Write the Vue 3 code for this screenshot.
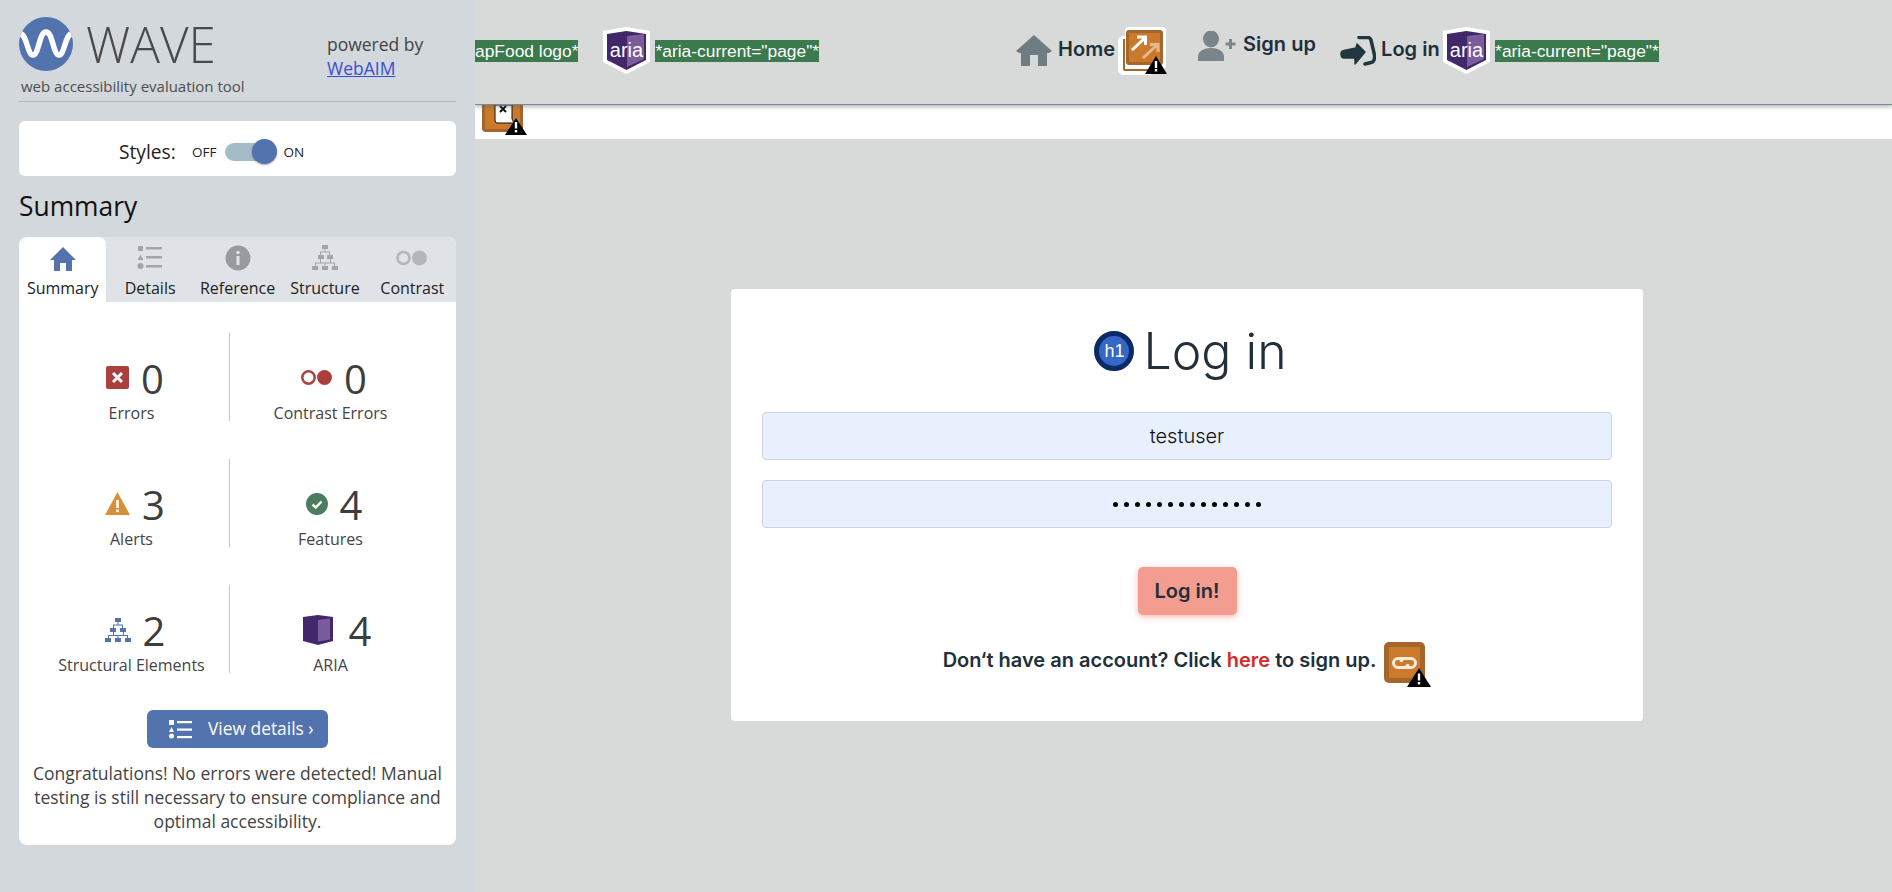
<script setup>
const tabs = ['Summary', 'Details', 'Reference', 'Structure', 'Contrast']
const dots = 14
</script>

<template>
  <div class="page">
    <aside class="wave">
      <div class="brand">
        <div class="brand_left">
          <div class="logo_row">
            <svg class="logo" viewBox="0 0 54 54">
              <clipPath id="logo_clip"><circle cx="27" cy="27" r="27" /></clipPath>
              <circle cx="27" cy="27" r="27" fill="#5273ae" />
              <path clip-path="url(#logo_clip)" d="M0 17C8 15 8 38 14 38C20 38 20 15 27 15C34 15 34 38 40 38C46 38 46 15 54 17" fill="none" stroke="#fff" stroke-width="5.5" />
            </svg>
            <span class="wave_name">WAVE</span>
          </div>
          <div class="tagline">web accessibility evaluation tool</div>
        </div>
        <div class="powered">powered by<br><a class="webaim" href="#">WebAIM</a></div>
      </div>

      <div class="styles_card">
        <span class="styles_label">Styles:</span>
        <span class="toggle_text off">OFF</span>
        <span class="track"><span class="knob"></span></span>
        <span class="toggle_text on">ON</span>
      </div>

      <h2 class="summary_title">Summary</h2>

      <div class="panel">
        <div class="tabs">
          <div v-for="(tab, i) in tabs" :key="tab" class="tab" :class="{ tab_active: i == 0 }">
            <svg v-if="i == 0" class="tab_icon" viewBox="0 0 26 26"><path fill="#5273ae" d="M13 2L26 15H22V26H16V18H10V26H4V15H0Z" /></svg>
            <svg v-if="i == 1" class="tab_icon" viewBox="0 0 26 26" fill="#a2a5a9"><rect x="1" y="1" width="5" height="5" /><path d="M3.5 9.5L6.500 15H.5Z" /><circle cx="3.500" cy="21" r="3" /><rect x="9" y="2" width="16" height="2.500" /><rect x="9" y="11" width="16" height="2.500" /><rect x="9" y="20" width="16" height="2.500" /></svg>
            <svg v-if="i == 2" class="tab_icon" viewBox="0 0 26 26"><circle cx="13" cy="13" r="12.500" fill="#989a9e" /><rect x="11.500" y="11" width="3" height="9" fill="#dfe3e7" /><circle cx="13" cy="7.500" r="1.800" fill="#dfe3e7" /></svg>
            <svg v-if="i == 3" class="tab_icon" viewBox="0 0 26 26" fill="#a2a5a9"><rect x="10" y="0" width="6" height="4" /><rect x="6" y="10" width="6" height="4" /><rect x="15" y="10" width="6" height="4" /><rect x="0" y="21" width="6" height="4" /><rect x="10" y="21" width="6" height="4" /><rect x="20" y="21" width="6" height="4" /><path d="M12.500 4h1v2.500H18V10h-1V7.500H9V10H8V6.500h4.500zM8 14h1v3.500h9V14h1v3.500h4V21h-1v-2.500H13.500V21h-1v-2.500H4V21H3v-3.500h5z" /></svg>
            <svg v-if="i == 4" class="tab_icon tab_icon_wide" viewBox="0 0 32 16"><circle cx="7.500" cy="8" r="6" fill="none" stroke="#b4b7ba" stroke-width="2.500" /><circle cx="23.500" cy="8" r="7.500" fill="#b4b7ba" /></svg>
            <span>{{ tab }}</span>
          </div>
        </div>

        <div class="stats">
          <div class="stat stat_left">
            <div class="stat_top">
              <svg class="stat_icon" width="23" height="23" viewBox="0 0 23 23"><rect width="23" height="23" rx="2" fill="#ab3f3d" /><path d="M7 7L16 16M16 7L7 16" stroke="#fff" stroke-width="3" /></svg>
              <span class="num">0</span>
            </div>
            <div class="stat_label">Errors</div>
          </div>
          <div class="stat">
            <div class="stat_top">
              <svg class="stat_icon" width="31" height="15" viewBox="0 0 31 15"><circle cx="7.500" cy="7.500" r="6.200" fill="none" stroke="#ab3f3d" stroke-width="2.500" /><circle cx="23.500" cy="7.500" r="7.500" fill="#ab3f3d" /></svg>
              <span class="num">0</span>
            </div>
            <div class="stat_label">Contrast Errors</div>
          </div>
          <div class="stat stat_left">
            <div class="stat_top">
              <svg class="stat_icon" width="25" height="23" viewBox="0 0 25 23"><path d="M12.500 0L25 23H0Z" fill="#d98f38" /><rect x="11.200" y="8" width="2.600" height="8" fill="#fff" /><rect x="11.200" y="17.500" width="2.600" height="2.600" fill="#fff" /></svg>
              <span class="num">3</span>
            </div>
            <div class="stat_label">Alerts</div>
          </div>
          <div class="stat">
            <div class="stat_top">
              <svg class="stat_icon" width="22" height="22" viewBox="0 0 22 22"><circle cx="11" cy="11" r="11" fill="#4c7d61" /><path d="M6.500 11.500L9.800 14.500L15.500 8.500" fill="none" stroke="#fff" stroke-width="2.400" /></svg>
              <span class="num">4</span>
            </div>
            <div class="stat_label">Features</div>
          </div>
          <div class="stat stat_left">
            <div class="stat_top">
              <svg class="stat_icon" width="26" height="24" viewBox="0 0 26 24" fill="#5273ae"><rect x="10" y="0" width="6" height="4" /><rect x="5" y="10" width="6" height="4" /><rect x="15" y="10" width="6" height="4" /><rect x="0" y="20" width="6" height="4" /><rect x="10" y="20" width="6" height="4" /><rect x="20" y="20" width="6" height="4" /><path d="M12.500 4h1v2.500H18V10h-1V7.500H9V10H8V6.500h4.500zM8 14h1v3h9v-3h1v3h4v3h-1v-2H13.500v2h-1v-2H4v2H3v-3h5z" /></svg>
              <span class="num">2</span>
            </div>
            <div class="stat_label">Structural Elements</div>
          </div>
          <div class="stat">
            <div class="stat_top stat_top_aria">
              <svg class="stat_icon" width="30" height="30" viewBox="0 0 30 30"><path d="M0 2L15 0L30 2V26L15 30L0 26Z" fill="#42286b" /><path d="M15 5L27 3.500V24.500L15 26.500Z" fill="#7a5b9b" /></svg>
              <span class="num">4</span>
            </div>
            <div class="stat_label">ARIA</div>
          </div>
        </div>

        <div class="details_row">
          <button class="details_btn">
            <svg width="23" height="19" viewBox="0 0 23 19" fill="#fff"><rect x="0" y="0" width="5" height="5" /><path d="M2.500 7L5 12H0Z" /><circle cx="2.500" cy="16" r="2.500" /><rect x="8" y="1" width="15" height="2.200" /><rect x="8" y="8.500" width="15" height="2.200" /><rect x="8" y="16" width="15" height="2.200" /></svg>
            <span>View details ›</span>
          </button>
        </div>
        <p class="congrats">Congratulations! No errors were detected! Manual testing is still necessary to ensure compliance and optimal accessibility.</p>
      </div>
    </aside>

    <main class="site">
      <header class="topbar">
        <span class="aria_label">apFood logo*</span>
        <svg class="aria_badge badge_first" width="47" height="47" viewBox="0 0 47 47">
          <path d="M0 4L23.500 0L47 4V35L23.500 47L0 35Z" fill="#fff" />
          <path d="M4 7L23.500 4L43 7V33L23.500 43L4 33Z" fill="#42286b" />
          <path d="M24 9L41 7V32L24 40Z" fill="#7a5b9b" />
          <text x="23.500" y="30" text-anchor="middle" class="badge_text">aria</text>
        </svg>
        <span class="aria_label">*aria-current="page"*</span>

        <nav class="nav">
          <svg class="home_icon" width="36" height="31" viewBox="0 0 36 31"><path fill="#6f7c82" d="M18 0L36 16L33 18H31V31H22V20H14V31H5V18H3L0 16Z" /></svg>
          <span class="nav_text home_text">Home</span>
          <span class="flag flag_new">
            <svg width="48" height="48" viewBox="0 0 48 48">
              <path d="M11 0H44A4 4 0 0 1 48 4V38A4 4 0 0 1 44 42H36V44A4 4 0 0 1 32 48H5A5 5 0 0 1 0 43V14A5 5 0 0 1 5 9H7V4A4 4 0 0 1 11 0Z" fill="#fff" />
              <path d="M5 12V42A2 2 0 0 0 7 44H31V42H7V12Z" fill="#a4662a" />
              <rect x="8" y="3" width="37" height="35" rx="3" fill="#a4662a" />
              <rect x="11" y="6" width="31" height="29" fill="#cb7a2c" />
              <path d="M14 23L27 11M19 10H27.500V18" fill="none" stroke="#fff" stroke-width="3" />
              <path d="M25 31L39 18M32 17.500H40V25" fill="none" stroke="#e5b98d" stroke-width="3" />
            </svg>
            <svg class="warn warn_nav" width="22" height="18" viewBox="0 0 22 18"><path d="M11 0L22 18H0Z" fill="#000" /><rect x="9.800" y="5" width="2.400" height="7" fill="#fff" /><rect x="9.800" y="13" width="2.400" height="2.400" fill="#fff" /></svg>
          </span>

          <svg class="signup_icon" width="38" height="30" viewBox="0 0 38 30" fill="#79858a"><ellipse cx="13" cy="8" rx="8" ry="8.500" /><path d="M0 30V26C0 20 6 17 13 17C20 17 26 20 26 26V30Z" /><rect x="31" y="8" width="3" height="10" /><rect x="27.500" y="11.500" width="10" height="3" /></svg>
          <span class="nav_text signup_text">Sign up</span>

          <svg class="login_icon" width="36" height="30" viewBox="0 0 36 30"><path fill="#233640" stroke="#233640" stroke-width="1.500" stroke-linejoin="round" d="M1 18Q1 15 4 14.500L16 12L17 8L25 16L15 28V22H4Q1 22 1 18Z" /><path d="M19 1.500H28Q30 1.500 31 4L34.500 19Q35 26 31 26.500L25 28" fill="none" stroke="#233640" stroke-width="3.500" stroke-linecap="round" /></svg>
          <span class="nav_text login_text">Log in</span>
          <svg class="aria_badge badge_nav" width="47" height="47" viewBox="0 0 47 47">
            <path d="M0 4L23.500 0L47 4V35L23.500 47L0 35Z" fill="#fff" />
            <path d="M4 7L23.500 4L43 7V33L23.500 43L4 33Z" fill="#42286b" />
            <path d="M24 9L41 7V32L24 40Z" fill="#7a5b9b" />
            <text x="23.500" y="30" text-anchor="middle" class="badge_text">aria</text>
          </svg>
          <span class="aria_label">*aria-current="page"*</span>
        </nav>
      </header>

      <div class="strip">
        <svg class="strip_icon" width="46" height="30" viewBox="0 0 46 30">
          <path d="M0 0H41V23A4 4 0 0 1 37 27H4A4 4 0 0 1 0 23Z" fill="#a4662a" />
          <rect x="3" y="0" width="35" height="24" fill="#cb7a2c" />
          <path d="M13 0H30V14L32 18H15Q13 18 13 15Z" fill="#fff" stroke="#111" stroke-width="1" />
          <path d="M18 1L24 7M24 1L18 7" stroke="#111" stroke-width="2" />
          <path d="M34 13L45 30H23Z" fill="#000" />
          <rect x="32.800" y="17" width="2.400" height="6.500" fill="#fff" />
          <rect x="32.800" y="25" width="2.400" height="2.400" fill="#fff" />
        </svg>
      </div>

      <section class="login_card">
        <div class="heading">
          <span class="h1_badge">h1</span>
          <h1 class="login_title">Log in</h1>
        </div>
        <div class="field">testuser</div>
        <div class="field field_dots"><i v-for="n in dots" :key="n" class="dot"></i></div>
        <button class="login_btn">Log in!</button>
        <div class="signup_line">
          <span class="signup_sentence">Don‘t have an account? Click <a class="here" href="#">here</a> to sign up.</span>
          <span class="flag flag_link">
            <svg width="41" height="41" viewBox="0 0 41 41">
              <rect width="41" height="41" rx="5" fill="#a4662a" />
              <rect x="5" y="5" width="31" height="31" fill="#cb7a2c" />
              <path d="M22 16.500H14A4.500 4.500 0 0 0 14 25.500H21A4 4 0 0 0 24 22M19 25.500H27A4.500 4.500 0 0 0 27 16.500H20A4 4 0 0 0 17 20" fill="none" stroke="#fbead9" stroke-width="3" />
            </svg>
            <svg class="warn warn_link" width="24" height="19" viewBox="0 0 24 19"><path d="M12 0L24 19H0Z" fill="#000" /><rect x="10.800" y="5.500" width="2.400" height="7" fill="#fff" /><rect x="10.800" y="14" width="2.400" height="2.400" fill="#fff" /></svg>
          </span>
        </div>
      </section>
    </main>
  </div>
</template>

<style>
html, body { margin: 0; overflow: hidden; }
</style>

<style scoped>
.page {
  display: flex;
  width: 1892px;
  height: 892px;
  overflow: hidden;
  background: #d8dada;
  font-family: "Inter", sans-serif;
}

/* WAVE sidebar */
.wave {
  box-sizing: border-box;
  flex: 0 0 475px;
  height: 892px;
  padding: 17px 19px 0;
  background: #d3d8dc;
  font-family: "Open Sans", sans-serif;
  color: #3f3f3f;
}
.brand {
  display: flex;
  height: 84px;
  border-bottom: 1px solid #b3b8bd;
}
.brand_left { width: 308px; }
.logo_row { display: flex; align-items: center; height: 54px; }
.logo { width: 54px; height: 54px; }
.wave_name {
  margin-left: 13px;
  font-size: 49.500px;
  font-weight: 300;
  line-height: 54px;
  color: #4a4a4a;
}
.tagline {
  margin: 5px 0 0 2px;
  font-size: 15px;
  line-height: 20px;
  color: #4e4e4e;
}
.powered {
  padding-top: 15px;
  font-size: 17.500px;
  line-height: 24px;
  color: #444;
}
.webaim { color: #3a4fd0; }

.styles_card {
  display: flex;
  align-items: center;
  box-sizing: border-box;
  height: 55px;
  margin-top: 19px;
  padding: 6px 0 0 100px;
  border-radius: 6px;
  background: #fff;
}
.styles_label { width: 73px; font-size: 19.200px; color: #222; }
.toggle_text { font-size: 13.500px; color: #222; }
.track {
  position: relative;
  width: 46px;
  height: 18px;
  margin: 0 12px 0 9px;
  border-radius: 9px;
  background: #a3bcc8;
}
.knob {
  position: absolute;
  top: -3.500px;
  right: -6px;
  width: 25px;
  height: 25px;
  border-radius: 50%;
  background: #5273ae;
  box-shadow: 0 1px 2px rgba(0, 0, 0, .35);
}
.summary_title {
  margin: 13px 0 14px;
  font-size: 26.400px;
  font-weight: 400;
  line-height: 34px;
  color: #111;
}
.panel {
  height: 608px;
  border-radius: 8px;
  overflow: hidden;
  background: #fff;
}
.tabs { display: flex; height: 65px; background: #dfe3e7; }
.tab {
  flex: 1;
  display: flex;
  flex-direction: column;
  align-items: center;
  padding-top: 8px;
  box-sizing: border-box;
  font-size: 16px;
  line-height: 20px;
  color: #222;
  white-space: nowrap;
}
.tab_active { background: #fff; border-radius: 8px 8px 0 0; }
.tab_icon { width: 26px; height: 26px; margin-bottom: 7px; }
.tab_icon_wide { width: 32px; }

.stats {
  display: grid;
  grid-template-columns: 211px 226px;
  row-gap: 38px;
  padding-top: 31px;
}
.stat {
  height: 88px;
  text-align: center;
  box-sizing: border-box;
  padding-right: 25px;
}
.stat_left { border-right: 1px solid #c8c8c8; padding: 0 0 0 15px; }
.stat_top {
  display: flex;
  align-items: center;
  justify-content: center;
  gap: 12px;
  height: 69px;
  padding: 23px 0 0 7px;
  box-sizing: border-box;
}
.stat_top_aria { gap: 16px; padding-left: 13px; }
.stat_icon { margin-top: -3px; }
.num { font-size: 40px; font-weight: 400; line-height: 46px; color: #3d3d3d; }
.stat_label { font-size: 16px; line-height: 22px; color: #444; white-space: nowrap; }

.details_row { display: flex; justify-content: center; margin-top: 37px; }
.details_btn {
  display: flex;
  align-items: center;
  gap: 16px;
  width: 181px;
  height: 38px;
  padding: 0 0 0 22px;
  border: 0;
  border-radius: 6px;
  background: #5273ae;
  color: #fff;
  font-family: inherit;
  font-size: 17.400px;
}
.details_btn span { margin-top: -3px; }
.congrats {
  margin: 13px 8px 0;
  font-size: 17.500px;
  line-height: 24px;
  text-align: center;
  color: #444;
}

/* page behind the sidebar */
.site {
  flex: 1;
  min-width: 0;
  display: flex;
  flex-direction: column;
  align-items: flex-start;
  overflow: hidden;
}
.topbar {
  position: relative;
  z-index: 2;
  display: flex;
  align-items: center;
  box-sizing: border-box;
  width: 100%;
  height: 105px;
  padding-bottom: 3px;
  background: #d8dada;
  border-bottom: 1px solid #7c8b94;
  box-shadow: 0 2px 4px rgba(90, 95, 100, .45);
}
.aria_label {
  padding: 1px 0;
  background: #3a7a4c;
  color: #fff;
  font-family: "Liberation Sans", Arial, sans-serif;
  font-size: 17.400px;
  line-height: 20px;
  white-space: nowrap;
}
.badge_first { margin: 0 5px 0 25px; }
.badge_text {
  fill: #fff;
  font-family: "Liberation Sans", Arial, sans-serif;
  font-size: 20px;
}
.nav { display: flex; align-items: center; margin-left: 197px; }
.nav_text { font-size: 20px; font-weight: 600; color: #212f3a; white-space: nowrap; }
.home_text { width: 57px; margin: -4px 0 0 6px; }
.flag { position: relative; display: inline-block; }
.flag_new { margin: 0 32px 0 3px; height: 48px; }
.warn { position: absolute; }
.warn_nav { right: -1px; bottom: 1px; }
.signup_icon { margin-top: -10px; }
.signup_text { margin: -14px 0 0 7px; width: 76px; }
.login_icon { margin: 0 5px 0 21px; }
.login_text { width: 57px; margin-top: -4px; }
.badge_nav { margin: 0 5px; }

.strip {
  width: 100%;
  height: 34px;
  background: #fff;
  overflow: hidden;
}
.strip_icon { display: block; margin-left: 7px; }

.login_card {
  box-sizing: border-box;
  width: 912px;
  height: 432px;
  margin: 150px 0 0 256px;
  padding: 0 31px;
  border-radius: 4px;
  background: #fff;
  text-align: center;
  color: #212f3a;
}
.heading {
  display: flex;
  align-items: center;
  justify-content: center;
  gap: 9px;
  height: 123px;
  padding-left: 7px;
}
.h1_badge {
  width: 40px;
  height: 40px;
  box-sizing: border-box;
  border: 5px solid #0b2a66;
  border-radius: 50%;
  background: #3567c4;
  color: #fff;
  font-family: "Liberation Sans", Arial, sans-serif;
  font-size: 18px;
  line-height: 30px;
}
.login_title { margin: 0; font-size: 50px; font-weight: 300; line-height: 58px; }
.field {
  box-sizing: border-box;
  height: 48px;
  margin-bottom: 20px;
  border: 1px solid #ced4da;
  border-radius: 4px;
  background: #e8f0fe;
  font-size: 20px;
  font-weight: 300;
  line-height: 46px;
  color: #111;
}
.field_dots {
  display: flex;
  align-items: center;
  justify-content: center;
  gap: 6px;
}
.dot { width: 5px; height: 5px; border-radius: 50%; background: #000; }
.login_btn {
  display: block;
  width: 99px;
  height: 48px;
  margin: 39px auto 0;
  border: 0;
  border-radius: 5px;
  background: #f39c90;
  box-shadow: 0 2px 6px rgba(240, 130, 120, .55);
  color: #212f3a;
  font-family: inherit;
  font-size: 20px;
  font-weight: 600;
}
.signup_line {
  display: flex;
  align-items: center;
  justify-content: center;
  gap: 8px;
  margin: 27px 6px 0 0;
  font-size: 20px;
  font-weight: 600;
}
.signup_sentence { margin-top: -5px; }
.here { color: #d32a2a; text-decoration: none; }
.flag_link { height: 41px; }
.warn_link { right: -6px; bottom: -4px; }
</style>
